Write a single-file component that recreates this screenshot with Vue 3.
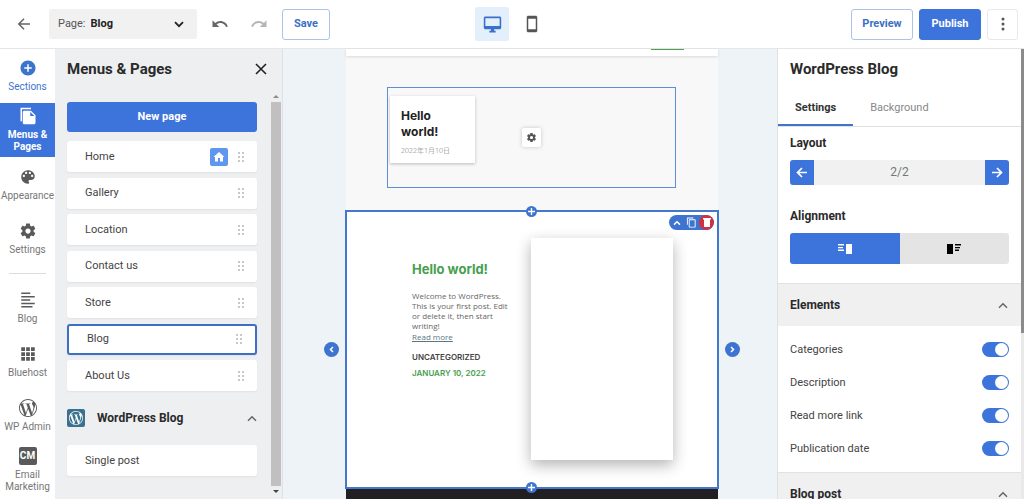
<template>
  <div class="builder">
    <!-- Top bar -->
    <header class="topbar">
      <div class="topbar-left">
        <button class="icon-btn back" aria-label="Back">
          <svg width="14" height="14" viewBox="0 0 14 14" fill="none" stroke="#666" stroke-width="1.5"><path d="M13 7H2M7 1.8L1.8 7 7 12.2" /></svg>
        </button>
        <div class="page-select">
          <label for="page">Page:</label>
          <select id="page" v-model="activePage">
            <option v-for="page in pages" :key="page">{{ page }}</option>
          </select>
          <svg class="chevron" width="10" height="7" viewBox="0 0 10 7" fill="none" stroke="#222" stroke-width="1.8"><path d="M1 1.2l4 4 4-4" /></svg>
        </div>
        <button class="icon-btn undo" aria-label="Undo">
          <svg width="18" height="18" viewBox="0 0 24 24" fill="#666"><path d="M12.5 8c-2.65 0-5.05.99-6.9 2.6L2 7v9h9l-3.62-3.62c1.39-1.16 3.16-1.88 5.12-1.88 3.54 0 6.55 2.31 7.6 5.5l2.37-.78C21.08 11.03 17.15 8 12.5 8z" /></svg>
        </button>
        <button class="icon-btn redo" aria-label="Redo">
          <svg width="18" height="18" viewBox="0 0 24 24" fill="#b5b5b5"><path d="M18.4 10.6C16.55 8.99 14.15 8 11.5 8c-4.65 0-8.58 3.03-9.96 7.22L3.9 16c1.05-3.19 4.05-5.5 7.6-5.5 1.95 0 3.73.72 5.12 1.88L13 16h9V7l-3.6 3.6z" /></svg>
        </button>
        <button class="btn save">Save</button>
      </div>
      <div class="devices">
        <button class="device active" aria-label="Desktop">
          <svg width="19" height="19" viewBox="0 0 24 24" fill="#3c6fc9"><path d="M21 2H3c-1.1 0-2 .9-2 2v12c0 1.1.9 2 2 2h7v2H8v2h8v-2h-2v-2h7c1.1 0 2-.9 2-2V4c0-1.1-.9-2-2-2zm0 12H3V4h18v10z" /></svg>
        </button>
        <button class="device" aria-label="Mobile">
          <svg width="18" height="18" viewBox="0 0 24 24" fill="#555"><path d="M17 1H7c-1.1 0-2 .9-2 2v18c0 1.1.9 2 2 2h10c1.1 0 2-.9 2-2V3c0-1.1-.9-2-2-2zm0 18H7V5h10v14z" /></svg>
        </button>
      </div>
      <div class="topbar-right">
        <button class="btn preview">Preview</button>
        <button class="btn primary">Publish</button>
        <button class="btn more" aria-label="More">
          <svg width="4" height="14" viewBox="0 0 4 14" fill="#555"><circle cx="2" cy="2" r="1.5" /><circle cx="2" cy="7" r="1.5" /><circle cx="2" cy="12" r="1.5" /></svg>
        </button>
      </div>
    </header>

    <div class="workspace">
      <!-- Icon rail -->
      <nav class="rail">
        <template v-for="item in railItems" :key="item.label">
          <hr v-if="item.divider" />
          <a href="#" :class="['rail-item', item.state]">
            <span v-if="item.icon === 'cm'" class="cm-icon">CM</span>
            <svg v-else width="18" height="18" viewBox="0 0 24 24" fill="currentColor"><path :d="icons[item.icon]" /></svg>
            <span class="rail-label">{{ item.label }}</span>
          </a>
        </template>
      </nav>

      <!-- Pages panel -->
      <aside class="pages-panel">
        <div class="panel-head">
          <h2>Menus &amp; Pages</h2>
          <button class="icon-btn" aria-label="Close">
            <svg width="12" height="12" viewBox="0 0 12 12" stroke="#222" stroke-width="1.6"><path d="M1 1l10 10M11 1L1 11" /></svg>
          </button>
        </div>
        <div class="panel-body">
          <div class="panel-content">
            <button class="new-page">New page</button>
            <ul class="page-list">
              <li
                v-for="page in pages"
                :key="page"
                :class="['page-row', { selected: page === activePage }]"
                @click="activePage = page"
              >
                <span class="page-name">{{ page }}</span>
                <span v-if="page === 'Home'" class="home-badge">
                  <svg width="12" height="12" viewBox="0 0 24 24" fill="#fff"><path d="M10 21v-7h4v7h6v-9h3L12 2 1 12h3v9z" /></svg>
                </span>
                <svg class="grip" width="6" height="10" viewBox="0 0 6 10" fill="#c8c8c8">
                  <path d="M0 0h2v2H0zM4 0h2v2H4zM0 4h2v2H0zM4 4h2v2H4zM0 8h2v2H0zM4 8h2v2H4z" />
                </svg>
              </li>
            </ul>
            <div class="group-head">
              <span class="wp-badge">
                <svg width="14" height="14" viewBox="0 0 24 24" fill="#fff"><path :d="icons.wp" /></svg>
              </span>
              <h3>WordPress Blog</h3>
              <svg width="10" height="7" viewBox="0 0 10 7" fill="none" stroke="#666" stroke-width="1.5"><path d="M1 5.8l4-4 4 4" /></svg>
            </div>
            <div class="page-row">
              <span class="page-name">Single post</span>
            </div>
          </div>
          <div class="scrollbar">
            <i class="arrow up"></i>
            <i class="thumb"></i>
            <i class="arrow down"></i>
          </div>
        </div>
      </aside>

      <!-- Canvas -->
      <main class="canvas">
        <div class="site">
          <div class="site-header"><span class="site-cta"></span></div>
          <section class="intro">
            <div class="intro-frame">
              <article class="post-card">
                <h4>Hello world!</h4>
                <time>2022年1月10日</time>
              </article>
              <button class="gear" aria-label="Section settings">
                <svg width="11" height="11" viewBox="0 0 24 24" fill="#555"><path :d="icons.gear" /></svg>
              </button>
            </div>
          </section>
          <section class="post-section">
            <div class="post-text">
              <h1>Hello world!</h1>
              <p>Welcome to WordPress. This is your first post. Edit or delete it, then start writing!</p>
              <a href="#">Read more</a>
              <span class="category">UNCATEGORIZED</span>
              <span class="date">JANUARY 10, 2022</span>
            </div>
            <div class="post-image"></div>

            <div class="section-tools">
              <button aria-label="Move up">
                <svg width="8" height="6" viewBox="0 0 8 6" fill="none" stroke="#fff" stroke-width="1.5"><path d="M1 4.6l3-2.8 3 2.8" /></svg>
              </button>
              <button aria-label="Duplicate">
                <svg width="11" height="11" viewBox="0 0 24 24" fill="#fff"><path d="M16 1H4c-1.1 0-2 .9-2 2v14h2V3h12V1zm3 4H8c-1.1 0-2 .9-2 2v14c0 1.1.9 2 2 2h11c1.1 0 2-.9 2-2V7c0-1.1-.9-2-2-2zm0 16H8V7h11v14z" /></svg>
              </button>
              <button class="danger" aria-label="Delete">
                <svg width="8" height="9" viewBox="0 0 8 9" fill="#fff"><path d="M1 1h6v8H1zM0 0h8v1.5H0z" /></svg>
              </button>
            </div>
            <button class="add top" aria-label="Add section above"><svg width="7" height="7" viewBox="0 0 7 7" stroke="#fff" stroke-width="1.4"><path d="M3.5 0v7M0 3.5h7" /></svg></button>
            <button class="add bottom" aria-label="Add section below"><svg width="7" height="7" viewBox="0 0 7 7" stroke="#fff" stroke-width="1.4"><path d="M3.5 0v7M0 3.5h7" /></svg></button>
            <button class="slide prev" aria-label="Previous layout"><svg width="5" height="7" viewBox="0 0 5 7" fill="none" stroke="#fff" stroke-width="1.5"><path d="M4 1L1.5 3.5 4 6" /></svg></button>
            <button class="slide next" aria-label="Next layout"><svg width="5" height="7" viewBox="0 0 5 7" fill="none" stroke="#fff" stroke-width="1.5"><path d="M1 1l2.5 2.5L1 6" /></svg></button>
          </section>
          <footer class="site-footer"></footer>
        </div>
      </main>

      <!-- Settings panel -->
      <aside class="settings-panel">
        <div class="settings-content">
          <h2>WordPress Blog</h2>
          <div class="tabs">
            <button :class="['tab', { active: tab === 'settings' }]" @click="tab = 'settings'">Settings</button>
            <button :class="['tab', { active: tab === 'background' }]" @click="tab = 'background'">Background</button>
          </div>
          <div class="controls">
            <h3>Layout</h3>
            <div class="stepper">
              <button aria-label="Previous"><svg width="12" height="11" viewBox="0 0 12 11" fill="none" stroke="#fff" stroke-width="1.7"><path d="M11 5.5H2M6 1L1.5 5.5 6 10" /></svg></button>
              <span>2/2</span>
              <button aria-label="Next"><svg width="12" height="11" viewBox="0 0 12 11" fill="none" stroke="#fff" stroke-width="1.7"><path d="M1 5.5h9M6 1l4.5 4.5L6 10" /></svg></button>
            </div>
            <h3>Alignment</h3>
            <div class="segmented">
              <button class="active" aria-label="Image right">
                <svg width="14" height="10" viewBox="0 0 14 10" fill="#fff"><path d="M0 0h6v1.5H0zM0 3h5v1.3H0zM0 5.6h6v1.3H0zM8 0h6v10H8z" /></svg>
              </button>
              <button aria-label="Image left">
                <svg width="14" height="10" viewBox="0 0 14 10" fill="#000"><path d="M0 0h6v10H0zM8 0h6v1.5H8zM8 3h5v1.3H8zM8 5.6h4v1.3H8z" /></svg>
              </button>
            </div>
          </div>
          <div class="section-head">
            <h3>Elements</h3>
            <svg width="10" height="7" viewBox="0 0 10 7" fill="none" stroke="#666" stroke-width="1.5"><path d="M1 5.8l4-4 4 4" /></svg>
          </div>
          <div class="toggles">
            <div v-for="item in elements" :key="item.id" class="toggle-row">
              <label :for="item.id">{{ item.label }}</label>
              <input :id="item.id" v-model="item.on" type="checkbox" />
            </div>
          </div>
          <div class="section-head">
            <h3>Blog post</h3>
            <svg width="10" height="7" viewBox="0 0 10 7" fill="none" stroke="#666" stroke-width="1.5"><path d="M1 5.8l4-4 4 4" /></svg>
          </div>
        </div>
        <div class="settings-scroll"><i></i></div>
      </aside>
    </div>
  </div>
</template>

<script setup>
import { ref } from 'vue'

const pages = ['Home', 'Gallery', 'Location', 'Contact us', 'Store', 'Blog', 'About Us']
const activePage = ref('Blog')
const tab = ref('settings')

const elements = ref([
  { id: 'categories', label: 'Categories', on: true },
  { id: 'description', label: 'Description', on: true },
  { id: 'read-more', label: 'Read more link', on: true },
  { id: 'publication-date', label: 'Publication date', on: true }
])

const railItems = [
  { label: 'Sections', icon: 'plus', state: 'accent' },
  { label: 'Menus & Pages', icon: 'pages', state: 'active' },
  { label: 'Appearance', icon: 'palette' },
  { label: 'Settings', icon: 'gear' },
  { label: 'Blog', icon: 'lines', divider: true },
  { label: 'Bluehost', icon: 'grid' },
  { label: 'WP Admin', icon: 'wp' },
  { label: 'Email Marketing', icon: 'cm' }
]

const icons = {
  plus: 'M12 2C6.48 2 2 6.48 2 12s4.48 10 10 10 10-4.48 10-10S17.52 2 12 2zm5 11h-4v4h-2v-4H7v-2h4V7h2v4h4v2z',
  pages: 'M16 1H2v18h2V3h12V1zM7 5c-1.1 0-2 .9-2 2v14c0 1.1.9 2 2 2h13c1.1 0 2-.9 2-2V11l-6-6H7zm8 7V6.5l5.5 5.5H15z',
  palette: 'M12 3c-4.97 0-9 4.03-9 9s4.03 9 9 9c.83 0 1.5-.67 1.5-1.5 0-.39-.15-.74-.39-1.01-.23-.26-.38-.61-.38-.99 0-.83.67-1.5 1.5-1.5H16c2.76 0 5-2.24 5-5 0-4.42-4.03-8-9-8zm-5.5 9c-.83 0-1.5-.67-1.5-1.5S5.67 9 6.5 9 8 9.67 8 10.5 7.33 12 6.5 12zm3-4C8.67 8 8 7.33 8 6.5S8.67 5 9.5 5s1.5.67 1.5 1.5S10.33 8 9.5 8zm5 0c-.83 0-1.5-.67-1.5-1.5S13.67 5 14.5 5s1.5.67 1.5 1.5S15.33 8 14.5 8zm3 4c-.83 0-1.5-.67-1.5-1.5S16.67 9 17.5 9s1.5.67 1.5 1.5-.67 1.5-1.5 1.5z',
  gear: 'M19.43 12.98c.04-.32.07-.64.07-.98s-.03-.66-.07-.98l2.11-1.65c.19-.15.24-.42.12-.64l-2-3.46c-.12-.22-.39-.3-.61-.22l-2.49 1c-.52-.4-1.08-.73-1.69-.98l-.38-2.65C14.46 2.18 14.25 2 14 2h-4c-.25 0-.46.18-.49.42l-.38 2.65c-.61.25-1.17.59-1.69.98l-2.49-1c-.23-.09-.49 0-.61.22l-2 3.46c-.13.22-.07.49.12.64l2.11 1.65c-.04.32-.07.65-.07.98s.03.66.07.98l-2.11 1.65c-.19.15-.24.42-.12.64l2 3.46c.12.22.39.3.61.22l2.49-1c.52.4 1.08.73 1.69.98l.38 2.65c.03.24.24.42.49.42h4c.25 0 .46-.18.49-.42l.38-2.65c.61-.25 1.17-.59 1.69-.98l2.49 1c.23.09.49 0 .61-.22l2-3.46c.12-.22.07-.49-.12-.64l-2.11-1.65zM12 15.5c-1.93 0-3.5-1.57-3.5-3.5s1.57-3.5 3.5-3.5 3.5 1.57 3.5 3.5-1.57 3.5-3.5 3.5z',
  lines: 'M3 2h12v2H3zM3 6.5h18v2H3zM3 11h12v2H3zM3 15.5h18v2H3zM3 20h15v2H3z',
  grid: 'M3 3h5v5H3zM9.5 3h5v5h-5zM16 3h5v5h-5zM3 9.5h5v5H3zM9.5 9.5h5v5h-5zM16 9.5h5v5h-5zM3 16h5v5H3zM9.5 16h5v5h-5zM16 16h5v5h-5z',
  wp: 'M21.469 6.825c.84 1.537 1.318 3.3 1.318 5.175 0 3.979-2.156 7.456-5.363 9.325l3.295-9.527c.615-1.54.82-2.771.82-3.864 0-.405-.026-.78-.07-1.11m-7.981.105c.647-.03 1.232-.105 1.232-.105.582-.075.514-.93-.067-.899 0 0-1.755.135-2.88.135-1.064 0-2.85-.15-2.85-.15-.585-.03-.661.855-.075.885 0 0 .54.061 1.125.09l1.68 4.605-2.37 7.08L5.354 6.9c.649-.03 1.234-.1 1.234-.1.585-.075.516-.93-.065-.896 0 0-1.746.138-2.874.138-.2 0-.438-.008-.69-.015C4.911 3.15 8.235 1.215 12 1.215c2.809 0 5.365 1.072 7.286 2.833-.046-.003-.091-.009-.141-.009-1.06 0-1.812.923-1.812 1.914 0 .89.513 1.643 1.06 2.531.411.72.89 1.643.89 2.977 0 .915-.354 1.994-.821 3.479l-1.075 3.585-3.9-11.61.001.014zM12 22.784c-1.059 0-2.081-.153-3.048-.437l3.237-9.406 3.315 9.087c.024.053.05.101.078.149-1.12.393-2.325.609-3.582.609M1.211 12c0-1.564.336-3.05.935-4.39L7.29 21.709C3.694 19.96 1.212 16.271 1.211 12M12 0C5.385 0 0 5.385 0 12s5.385 12 12 12 12-5.385 12-12S18.615 0 12 0'
}
</script>

<style>
html,
body {
  overflow: hidden;
}
</style>

<style scoped>
.builder {
  display: flex;
  flex-direction: column;
  height: 100vh;
  font-family: Roboto, "Noto Sans CJK SC", sans-serif;
  font-size: 11px;
  line-height: 16px;
  color: #444;
  background: #fff;
}

.builder *,
.builder *::before {
  box-sizing: border-box;
}

h1, h2, h3, h4, p, ul {
  margin: 0;
  padding: 0;
}

button {
  font: inherit;
  padding: 0;
  border: none;
  background: none;
  cursor: pointer;
  display: flex;
  align-items: center;
  justify-content: center;
}

svg {
  display: block;
  flex-shrink: 0;
}

/* Top bar */
.topbar {
  flex-shrink: 0;
  height: 49px;
  display: grid;
  grid-template-columns: 1fr auto 1fr;
  align-items: center;
  padding: 0 6px;
  border-bottom: 1px solid #e4e6e8;
}

.topbar-left,
.topbar-right,
.devices {
  display: flex;
  align-items: center;
}

.topbar-left {
  padding-left: 6px;
}

.icon-btn {
  width: 24px;
  height: 24px;
}

.page-select {
  position: relative;
  display: flex;
  align-items: center;
  width: 148px;
  height: 30px;
  margin: 0 11px 0 13px;
  padding-left: 9px;
  background: #f1f1f1;
  border-radius: 2px;
  font-size: 11px;
}

.page-select label {
  color: #555;
}

.page-select select {
  flex: 1;
  height: 30px;
  padding: 0 5px;
  border: none;
  background: none;
  appearance: none;
  font: inherit;
  font-weight: 700;
  color: #222;
}

.page-select .chevron {
  position: absolute;
  right: 13px;
  pointer-events: none;
}

.redo {
  margin-left: 15px;
}

.btn {
  height: 31px;
  border: 1px solid #a9c3ec;
  border-radius: 3px;
  font-size: 11px;
  font-weight: 700;
  color: #3a70c4;
}

.save {
  width: 48px;
  margin-left: 11px;
}

.devices {
  gap: 6px;
}

.device {
  width: 34px;
  height: 34px;
  border-radius: 2px;
}

.device.active {
  background: #e3f0fc;
}

.topbar-right {
  justify-content: flex-end;
  gap: 6px;
}

.preview,
.primary {
  width: 62px;
}

.primary {
  background: #3d74db;
  border-color: #3d74db;
  color: #fff;
}

.more {
  width: 31px;
  border-color: #e8e8ee;
}

.workspace {
  flex: 1;
  min-height: 0;
  display: flex;
}

/* Icon rail */
.rail {
  flex-shrink: 0;
  width: 55px;
  overflow: hidden;
}

.rail hr {
  height: 1px;
  margin: 7px 9px;
  border: none;
  background: #dcdcdc;
}

.rail-item {
  display: flex;
  flex-direction: column;
  align-items: center;
  justify-content: center;
  gap: 4px;
  height: 54px;
  color: #5a5a5a;
  text-decoration: none;
  text-align: center;
  font-size: 10px;
  line-height: 12px;
}

.rail-label {
  color: #777;
}

.rail-item.accent,
.rail-item.accent .rail-label {
  color: #3d74cb;
}

.rail-item.active,
.rail-item.active .rail-label {
  color: #fff;
}

.rail-item.active {
  margin-bottom: 1px;
  background: #3d74db;
  font-weight: 700;
}

.cm-icon {
  width: 18px;
  height: 18px;
  border-radius: 2px;
  background: #5a5a5a;
  color: #fff;
  font-weight: 700;
  line-height: 18px;
}

/* Pages panel */
.pages-panel {
  flex-shrink: 0;
  display: flex;
  flex-direction: column;
  width: 228px;
  background: #eeeff1;
  border-right: 1px solid #dfe2e5;
}

.panel-head {
  display: flex;
  align-items: center;
  justify-content: space-between;
  height: 40px;
  padding: 0 9px 0 12px;
}

h2 {
  font-size: 15px;
  line-height: 20px;
  font-weight: 700;
  color: #2a2a2a;
}

.panel-body {
  flex: 1;
  min-height: 0;
  display: flex;
  justify-content: space-between;
}

.panel-content {
  flex: 1;
  padding: 13px 14px 0 12px;
}

.new-page {
  width: 100%;
  height: 30px;
  border-radius: 3px;
  background: #3d74db;
  color: #fff;
  font-weight: 700;
}

.page-list {
  display: flex;
  flex-direction: column;
  justify-content: space-between;
  height: 250px;
  margin-top: 9px;
  list-style: none;
}

.page-row {
  display: flex;
  align-items: center;
  height: 31px;
  padding: 0 13px 0 18px;
  background: #fff;
  border-radius: 3px;
  box-shadow: 0 1px 2px rgba(0, 0, 0, 0.06);
}

.page-row.selected {
  border: 2px solid #3d6fc4;
}

.page-name {
  flex: 1;
}

.home-badge,
.wp-badge {
  display: flex;
  align-items: center;
  justify-content: center;
  width: 18px;
  height: 18px;
  border-radius: 2px;
}

.home-badge {
  margin-right: 10px;
  background: #5f97ee;
}

.wp-badge {
  margin-right: 12px;
  background: #39718f;
}

.group-head {
  display: flex;
  align-items: center;
  height: 54px;
}

h3 {
  font-size: 12px;
  line-height: 16px;
  font-weight: 700;
  color: #2a2a2a;
}

.group-head h3 {
  flex: 1;
}

.scrollbar {
  display: flex;
  flex-direction: column;
  align-items: center;
  gap: 4px;
  width: 10px;
  margin-right: 1px;
  padding: 6px 0;
}

.scrollbar .thumb {
  flex: 1;
  width: 10px;
  background: #c1bfc0;
}

.arrow {
  border: 3px solid transparent;
}

.arrow.up {
  border-top: none;
  border-bottom-color: #8a8a8a;
}

.arrow.down {
  border-bottom: none;
  border-top-color: #444;
}

/* Canvas */
.canvas {
  flex: 1;
  min-width: 0;
  padding: 0 59px 0 63px;
  background: #eef3f7;
}

.site {
  display: flex;
  flex-direction: column;
  height: 100%;
  background: #f8f8f9;
}

.site-header {
  flex-shrink: 0;
  display: flex;
  justify-content: flex-end;
  height: 7px;
  padding-right: 34px;
  background: #fff;
  box-shadow: 0 1px 3px rgba(0, 0, 0, 0.12);
}

.site-cta {
  width: 33px;
  height: 1px;
  background: #4ba352;
}

.intro {
  padding: 31px 42px 22px 41px;
}

.intro-frame {
  position: relative;
  height: 101px;
  padding: 8px 2px;
  border: 1px solid #5f8fd2;
}

.post-card {
  width: 85px;
  height: 67px;
  padding: 12px 11px 0;
  background: #fff;
  box-shadow: 0 1px 3px rgba(0, 0, 0, 0.25);
}

.post-card h4 {
  font-family: Inter, sans-serif;
  font-size: 12px;
  line-height: 16px;
  color: #222;
}

.post-card time {
  display: block;
  font-family: "Open Sans", "Noto Sans CJK SC", sans-serif;
  font-weight: 300;
  font-size: 7px;
  line-height: 22px;
  color: #666;
}

.gear {
  position: absolute;
  top: 40px;
  left: calc(50% - 10px);
  width: 19px;
  height: 19px;
  border-radius: 2px;
  background: #fff;
  box-shadow: 0 0 4px rgba(0, 0, 0, 0.2);
}

.post-section {
  position: relative;
  flex-shrink: 0;
  display: grid;
  grid-template-columns: 1fr 142px;
  gap: 17px;
  height: 279px;
  margin: 0 -1px;
  padding: 26px 44px 0 65px;
  border: 2px solid #4478cd;
  background: #fff;
  font-family: Inter, sans-serif;
}

.post-text {
  display: flex;
  flex-direction: column;
  align-items: flex-start;
  padding-top: 21px;
}

.post-text h1 {
  font-size: 13px;
  line-height: 20px;
  font-weight: 700;
  color: #46a04e;
}

.post-text p,
.post-text a {
  font-family: "Open Sans", sans-serif;
  font-size: 8px;
  line-height: 10px;
  color: #666;
}

.post-text p {
  margin: 12px 0 1px;
}

.post-text a {
  color: #5a7780;
}

.category,
.date {
  font-size: 8px;
  line-height: 16px;
  font-weight: 600;
}

.category {
  margin-top: 7px;
}

.date {
  color: #46a04e;
}

.post-image {
  height: 222px;
  background: #fff;
  box-shadow: 0 5px 14px rgba(0, 0, 0, 0.3);
}

.section-tools {
  position: absolute;
  top: 3px;
  right: 3px;
  display: flex;
  height: 15px;
  border-radius: 8px;
  background: #3d74d0;
  overflow: hidden;
}

.section-tools button {
  width: 15px;
}

.section-tools .danger {
  background: #d0323c;
  border-radius: 8px;
}

.add,
.slide {
  position: absolute;
  border-radius: 50%;
  background: #3d74cf;
}

.add {
  left: calc(50% - 6px);
  width: 11px;
  height: 11px;
}

.add.top {
  top: -6px;
}

.add.bottom {
  bottom: -6px;
}

.slide {
  top: calc(50% - 8px);
  width: 15px;
  height: 15px;
}

.slide.prev {
  left: -23px;
}

.slide.next {
  right: -23px;
}

.site-footer {
  flex: 1;
  background: #211f21;
}

/* Settings panel */
.settings-panel {
  flex-shrink: 0;
  display: flex;
  width: 247px;
  border-left: 1px solid #dfe2e5;
}

.settings-content {
  flex: 1;
  min-width: 0;
  overflow: hidden;
}

.settings-content h2 {
  padding: 10px 12px;
}

.tabs {
  display: flex;
  height: 38px;
  border-bottom: 1px solid #dfe2e5;
}

.tab {
  padding: 2px 17px 0;
  border-bottom: 2px solid transparent;
  font-size: 11px;
  color: #888;
}

.tab.active {
  border-bottom-color: #4275c4;
  font-weight: 700;
  color: #333;
}

.controls {
  padding: 8px 12px 19px;
}

.stepper,
.segmented {
  display: flex;
  border-radius: 3px;
  overflow: hidden;
}

.stepper {
  height: 25px;
  margin: 9px 0 23px;
  background: #f1f1f1;
}

.stepper button {
  width: 24px;
  background: #3d74db;
}

.stepper span {
  flex: 1;
  text-align: center;
  font-size: 12px;
  line-height: 25px;
  color: #777;
}

.segmented {
  height: 31px;
  margin-top: 9px;
}

.segmented button {
  flex: 1;
  background: #e4e4e4;
}

.segmented button.active {
  background: #3d74db;
}

.section-head {
  display: flex;
  align-items: center;
  justify-content: space-between;
  height: 43px;
  padding: 0 13px 0 12px;
  border-top: 1px solid #e2e2e2;
  background: #f0f0f1;
}

.toggles {
  padding: 7px 12px;
}

.toggle-row {
  display: flex;
  align-items: center;
  justify-content: space-between;
  height: 33px;
}

.toggle-row input {
  appearance: none;
  width: 27px;
  height: 15px;
  margin: 0;
  padding: 1px;
  border-radius: 8px;
  background: #bbb;
  cursor: pointer;
}

.toggle-row input::before {
  content: "";
  display: block;
  width: 13px;
  height: 13px;
  border-radius: 50%;
  background: #fff;
}

.toggle-row input:checked {
  background: #3d74db;
}

.toggle-row input:checked::before {
  margin-left: auto;
}

.settings-scroll {
  width: 3px;
  background: #e9e9e9;
}

.settings-scroll i {
  display: block;
  height: 63%;
  background: #8b8b8b;
}
</style>
